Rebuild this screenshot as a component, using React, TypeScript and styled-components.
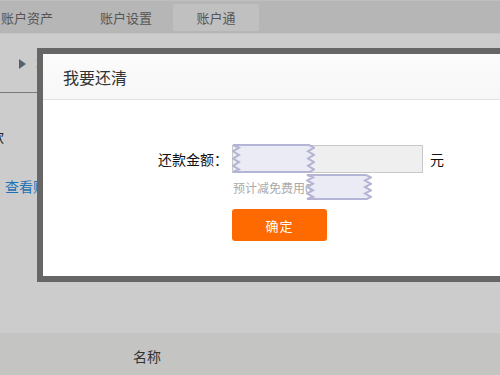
import React from "react";
import styled, { createGlobalStyle } from "styled-components";

const Global = createGlobalStyle`
  html, body { margin: 0; padding: 0; overflow: hidden; }
  body { font-family: "Noto Sans CJK SC", "Noto Sans", sans-serif; }
`;

const Page = styled.div`
  position: relative;
  width: 500px;
  height: 375px;
  overflow: hidden;
  display: flex;
  flex-direction: column;
  background: #cccccc;
`;

const TopBar = styled.div`
  height: 32px;
  flex: none;
  display: flex;
  align-items: center;
  background: #b6b6b6;
  border-top: 1px solid #bebebe;
  border-bottom: 1px solid #c4c4c4;
  box-sizing: content-box;
`;

const Tab = styled.div<{ $w: number; $ml: number; $active?: boolean }>`
  width: ${(p) => p.$w}px;
  margin-left: ${(p) => p.$ml}px;
  height: 27px;
  display: flex;
  align-items: center;
  justify-content: ${(p) => (p.$active ? "center" : "flex-start")};
  font-size: 13px;
  color: #555;
  border-radius: 2px;
  background: ${(p) => (p.$active ? "#c0c0c0" : "transparent")};
`;

const Main = styled.div`
  flex: 1;
  display: flex;
  flex-direction: column;
`;

const SideBlock = styled.div`
  width: 37px;
  display: flex;
  flex-direction: column;
`;

const TreeRow = styled.div`
  height: 59px;
  display: flex;
  align-items: center;
  padding-top: 2px;
  box-sizing: border-box;
  border-bottom: 1px solid #7a7a7a;
  white-space: nowrap;
`;

const Arrow = styled.span`
  width: 0;
  height: 0;
  margin-left: 19px;
  border-top: 5px solid transparent;
  border-bottom: 5px solid transparent;
  border-left: 7px solid #556070;
`;

const TreeText = styled.span`
  margin-left: 10px;
  font-size: 14px;
  color: #222;
`;

const CutText = styled.div`
  margin-top: 33px;
  margin-left: -10px;
  font-size: 14px;
  color: #222;
  white-space: nowrap;
`;

const LinkText = styled.div`
  margin-top: 30px;
  margin-left: 5px;
  font-size: 14px;
  color: #1d72b5;
  white-space: nowrap;
`;

const Spacer = styled.div`
  flex: 1;
`;

const BottomBar = styled.div`
  height: 42px;
  flex: none;
  background: #c4c4c2;
  display: flex;
  align-items: center;
  padding-left: 133px;
  padding-top: 3px;
  box-sizing: border-box;
  font-size: 14px;
  color: #333;
`;

const Modal = styled.div`
  position: absolute;
  left: 37px;
  top: 48px;
  width: 470px;
  height: 222px;
  border: 6px solid #666666;
  background: #ffffff;
  display: flex;
  flex-direction: column;
`;

const ModalHeader = styled.div`
  height: 45px;
  flex: none;
  display: flex;
  align-items: center;
  padding-left: 20px;
  background: linear-gradient(#fbfbfb, #f7f7f7);
  border-bottom: 1px solid #e2e2e2;
  font-size: 16px;
  color: #333;
`;

const ModalBody = styled.div`
  position: relative;
  flex: 1;
  padding-top: 45px;
  display: grid;
  grid-template-columns: 189px 191px auto;
  grid-auto-rows: min-content;
  align-items: center;
`;

const Label = styled.div`
  text-align: right;
  padding-right: 4px;
  font-size: 14px;
  color: #111;
`;

const Input = styled.div`
  height: 28px;
  box-sizing: border-box;
  background: #efefef;
  border: 1px solid #c8c8c8;
`;

const Unit = styled.div`
  padding-left: 7px;
  font-size: 14px;
  color: #111;
`;

const Hint = styled.div`
  grid-column: 2 / 4;
  margin-top: 6px;
  padding-left: 1px;
  height: 18px;
  line-height: 18px;
  font-size: 12px;
  color: #aaaaaa;
`;

const Submit = styled.button`
  grid-column: 2 / 3;
  margin-top: 12px;
  width: 95px;
  height: 32px;
  padding: 0;
  border: none;
  border-radius: 3px;
  background: #ff6a00;
  color: #fff;
  font-family: "Noto Sans CJK SC", sans-serif;
  font-size: 13px;
  letter-spacing: 1px;
`;

const Patch = styled.svg<{ $x: number; $y: number }>`
  position: absolute;
  left: ${(p) => p.$x}px;
  top: ${(p) => p.$y}px;
`;

function zig(w: number, h: number) {
  const teeth = 4;
  const step = h / (teeth * 2);
  let d = `M1 1 L${w - 6} 1`;
  for (let i = 1; i <= teeth * 2; i++) {
    const x = i % 2 === 1 ? w - 1 : w - 7;
    d += ` L${x} ${(i * step).toFixed(1)}`;
  }
  d += ` L${w - 5} ${h - 1} L1 ${h - 1}`;
  for (let i = teeth * 2 - 1; i >= 1; i--) {
    const x = i % 2 === 1 ? 7 : 1;
    d += ` L${x} ${(i * step).toFixed(1)}`;
  }
  d += " Z";
  return d;
}

const RedactPatch: React.FC<{ x: number; y: number; w: number; h: number }> = ({ x, y, w, h }) => (
  <Patch $x={x} $y={y} width={w} height={h} viewBox={`0 0 ${w} ${h}`}>
    <path d={zig(w, h)} fill="#ebebf5" stroke="#b4b4d4" strokeWidth={2} />
  </Patch>
);

export default function App() {
  return (
    <>
      <Global />
      <Page>
        <TopBar>
          <Tab $w={52} $ml={1}>账户资产</Tab>
          <Tab $w={60} $ml={47}>账户设置</Tab>
          <Tab $w={86} $ml={13} $active>账户通</Tab>
        </TopBar>
        <Main>
          <SideBlock>
            <TreeRow>
              <Arrow />
              <TreeText>不</TreeText>
            </TreeRow>
            <CutText>款</CutText>
            <LinkText>查看账</LinkText>
          </SideBlock>
          <Spacer />
        </Main>
        <BottomBar>名称</BottomBar>
        <Modal>
          <ModalHeader>我要还清</ModalHeader>
          <ModalBody>
            <Label>还款金额：</Label>
            <Input />
            <Unit>元</Unit>
            <div />
            <Hint>预计减免费用0</Hint>
            <div />
            <Submit>确定</Submit>
            <RedactPatch x={189} y={44} w={83} h={29} />
            <RedactPatch x={263} y={74} w={66} h={26} />
          </ModalBody>
        </Modal>
      </Page>
    </>
  );
}
